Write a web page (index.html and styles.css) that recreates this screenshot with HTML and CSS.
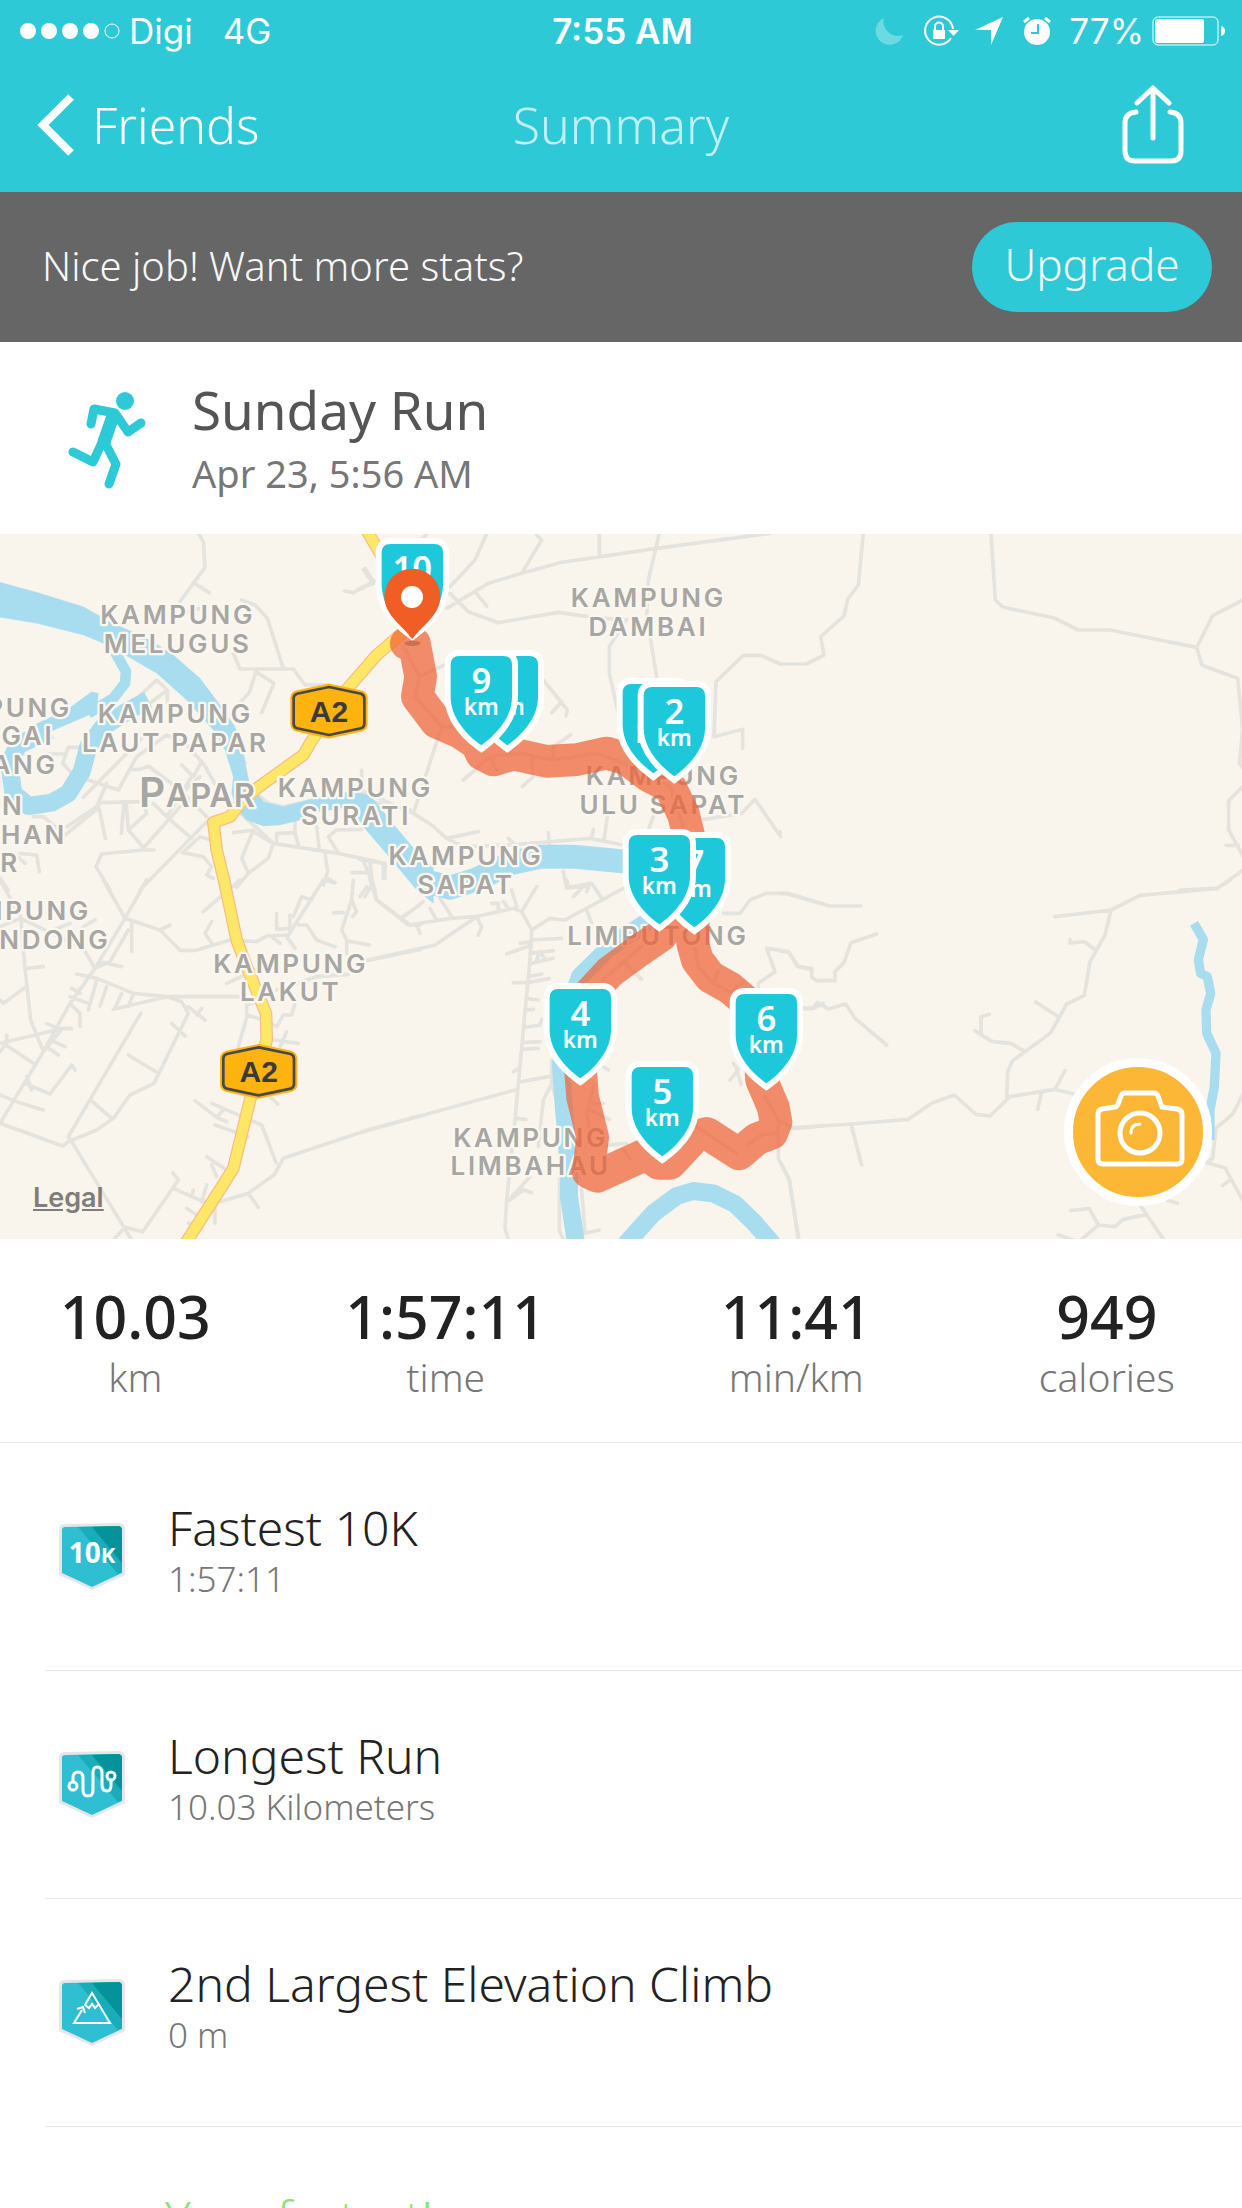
FILE: index.html
```html
<!DOCTYPE html>
<html lang="en">
<head>
	<meta charset="utf-8">
	<meta name="viewport" content="width=device-width, initial-scale=1">
	<title>Summary</title>
	<link rel="stylesheet" href="styles.css">
</head>

<body>
	<header class="topbar">
		<div class="status">
			<div class="status-left">
				<svg class="signal" viewBox="0 0 102 18">
					<circle cx="9" cy="9" r="8"/>
					<circle cx="30" cy="9" r="8"/>
					<circle cx="51" cy="9" r="8"/>
					<circle cx="72" cy="9" r="8"/>
					<circle class="empty" cx="93" cy="9" r="7"/>
				</svg>
				<span>Digi</span>
				<span class="network">4G</span>
			</div>
			<div class="clock">7:55 AM</div>
			<div class="status-right">
				<svg class="moon" viewBox="0 0 28 28"><path d="M9 1A14 14 0 1 0 28 18A14.500 14.500 0 0 1 9 1Z"/></svg>
				<svg class="lock" viewBox="0 0 36 32">
					<path class="line" d="M28 23A14 14 0 1 1 30 14"/>
					<path d="M25 15H36L30.500 21Z"/>
					<path class="line" d="M12 15V11.500A4 4 0 0 1 20 11.500V15"/>
					<rect x="10" y="15" width="12" height="9"/>
				</svg>
				<svg class="arrow" viewBox="0 0 28 28"><path d="M28 0L16 28V13H0Z"/></svg>
				<svg class="alarm" viewBox="0 0 28 30">
					<circle cx="14" cy="16" r="13"/>
					<path class="ears" d="M1 6L6 2M27 6L22 2"/>
					<path class="hands" d="M15 8V17H8"/>
				</svg>
				<span>77%</span>
				<svg class="battery" viewBox="0 0 74 30">
					<rect class="case" x="1" y="1" width="65" height="28" rx="5"/>
					<rect x="3" y="3" width="49" height="24" rx="2"/>
					<path d="M69 10Q73 11 73 15Q73 19 69 20Z"/>
				</svg>
			</div>
		</div>
		<nav class="nav">
			<a class="back" href="#">
				<svg viewBox="0 0 40 64"><path d="M35 4L7 32L35 60"/></svg>
				Friends
			</a>
			<h1>Summary</h1>
			<button class="share" type="button" aria-label="Share">
				<svg viewBox="0 0 62 80">
					<path d="M31 4V53M15 18L31 3L47 18M14 27Q3 28 3 38V66Q3 76 13 76H49Q59 76 59 66V38Q59 28 48 27"/>
				</svg>
			</button>
		</nav>
	</header>

	<section class="banner">
		<p>Nice job! Want more stats?</p>
		<button type="button" class="upgrade">Upgrade</button>
	</section>

	<section class="activity">
		<svg class="runner" viewBox="0 0 80 100">
			<circle cx="57" cy="11" r="9"/>
			<path class="arms" d="M23 34L26 19L47 23L60 42L73 33"/>
			<path class="body" d="M45 26L36 52"/>
			<path class="legs" d="M36 48L25 72L5 62M36 51L48 74L41 94"/>
		</svg>
		<div>
			<h2>Sunday Run</h2>
			<p>Apr 23, 5:56 AM</p>
		</div>
	</section>

	<section class="map">
		<!-- map is cut in six tiles, each group has its own origin -->
		<svg class="canvas" viewBox="0 0 3726 2115">
			<defs>
				<path id="shield" d="M-66 0H66Q92 0 92 26V122C92 185 45 235 0 268C-45 235 -92 185 -92 122V26Q-92 0 -66 0Z"/>
				<g id="highway">
					<path class="sign-edge" d="M0 -72L96 -52Q106 -48 106 -38V38Q106 48 96 52L0 72L-96 52Q-106 48 -106 38V-38Q-106 -48 -96 -52Z"/>
					<path class="sign" d="M0 -72L96 -52Q106 -48 106 -38V38Q106 48 96 52L0 72L-96 52Q-106 48 -106 38V-38Q-106 -48 -96 -52Z"/>
				</g>
			</defs>

			<!-- roads -->
			<g class="roads">
				<path transform="translate(0 -12)" d="M595 10L610 35L615 112L540 215M580 158L628 188M725 210L765 225L802 265L850 415M700 370L720 417H880L915 465H985M768 425L822 460L785 548M768 425L748 488L710 528M1095 115L1120 155L1060 188L1033 183M1120 155L1140 150
				M205 652H250M205 652L188 700L220 735L355 780L410 680L500 615L555 640L605 695L580 740L545 705M145 672H195M250 802L440 610M390 718H420L445 708L540 780L620 860M410 550L502 480L470 450L330 580M502 480V520
				M320 760L290 830L200 890M100 860H130L195 915L290 838L300 818L430 815M298 838L316 925M372 815L364 910M378 815L385 900L432 955M430 815L440 850L385 900M462 960H430L305 972L288 1010L330 1080M620 875L420 1080M430 955L540 830M500 860L575 925M575 740L500 860L460 820M610 700L650 770M545 790L600 740
				M700 830L820 940L1015 970L1155 1000V1045M700 908L760 900L725 985L745 1030L710 1072M760 905L820 940L805 985L745 1030M830 935V910L885 908L895 945M885 908V870M950 890L958 960M985 920L1015 970M985 920L1010 900L1085 898M975 970L983 1025L970 1065M983 1045L1005 1058M1055 1028H1105L1090 990L1125 1080M548 968L600 920L650 935M548 968L610 980L635 1010L620 1035L640 1045M770 790L805 820L850 830L1085 780L1085 720M1000 790L1230 840M60 970L110 975L118 1025M75 1000L40 970M0 1045L25 1080M610 480L700 600L735 700M520 260L600 235"/>
				<path transform="translate(1080 -12)" d="M200 10L190 25M378 15L345 90L270 170M530 15L545 30L485 130M718 10V80M1230 10L890 55L600 98L485 130L385 160L260 235M10 120L40 160L0 175M0 178L50 152M345 185L380 228M270 190L325 245L415 278L595 247L700 262L770 268M898 10L865 150L860 260L890 440M800 268L748 350V430L775 550M1062 620L1068 455L1150 376H1202L1262 402M1062 620L1148 598V655M550 450L622 540L618 558M605 515L575 548
				M130 350L178 440L275 395M178 440L165 500L245 590L400 600M245 590L160 850L215 885L260 925L355 905M0 780L160 850M310 750L390 680L480 670L580 690L710 670L850 720L930 770L970 890M580 690V650L632 615M515 680L520 740L487 770M390 680L410 720M260 925L310 950L450 945L690 925L790 945M565 908L568 945M445 925L470 950M700 898L695 925M742 860L732 930M880 860L865 900M1030 868L1145 850L1185 808L1262 920M610 1025L620 1075L690 1060L680 1085M0 988L70 1000V1045M30 1000L40 1075"/>
				<path transform="translate(2340 -12)" d="M250 10L235 165L203 208L192 258L122 320L132 375L80 402H0M633 10L646 210L668 231L823 264L895 300H990L1250 352L1298 257L1390 210M1250 352L1266 406L1373 445L1388 600L1378 700L1390 715M1388 770L1346 812V900L1390 980M1338 946H1375M1390 1020L1312 1075L1200 1080M0 905V915"/>
				<path transform="translate(0 1038)" d="M0 0L62 110L75 265L92 420L130 515L188 445M0 140L62 115L250 205L285 265M78 265L130 260M78 320L10 370L0 360M310 0L375 115L285 265L210 370L130 515L0 730M440 0L375 115L480 150L540 211H588L690 180M480 150L510 135M395 130V215M385 150L330 245L285 265M300 245L365 260M230 282L290 295L400 340L500 350H720M340 388L500 350L545 365L565 400L462 610L390 645L340 715L290 750L205 785M515 430L555 468M565 380L615 420M590 405L605 385M345 385L365 340M385 380L400 340M320 320L300 378M290 300L265 390M215 325L240 340M210 350L265 370M210 370L240 400V440M215 446H175L140 430M0 490L190 445M10 490L100 550M150 480L195 500M140 500L175 525M385 525L472 578M422 400L205 770L215 785L395 1080M0 730L188 798L205 785M75 610L150 642L215 555L225 570M80 590L95 630M0 645L50 665L130 690M272 660L335 715M340 1080L375 1042L428 1055L535 900L518 878M520 925L610 965L660 965L745 940L822 885L850 835L1110 748L1260 707M745 940L775 982M605 965L620 915M575 950L580 930M645 965V1030M560 985L595 1008M565 1030H590M585 662L650 712L680 725M635 670L785 735L828 848M650 712L670 690M645 735L745 770M620 830L680 870M635 855L650 890M810 650L833 672
				M680 310L800 255M715 500L742 405L790 420L830 440L850 405H875L885 370M830 330L950 290L1045 283M1100 242L1260 208M740 400V375L760 370M820 480L895 490M840 500L860 455M610 95L720 0M635 125L615 160L635 190M690 180L770 185L800 168L865 165L970 0L1005 8M830 100V148L870 145V105M880 110L905 50L935 60M895 135H920L950 180L1005 200M860 170L885 205M820 175L840 190M1060 0L1055 60L1025 150L1040 180V220M1055 60L1070 95L1058 110M1000 98H1030M1045 183L1108 195M1115 15L1095 50M1115 0L1130 60L1200 115L1260 75M1200 115L1225 135H1260M0 515L20 490V465M160 150L210 130M250 140L285 120"/>
				<path transform="translate(1080 1038)" d="M30 0L50 60L150 135L270 115L345 110L460 85L485 95L530 20M20 20L0 50M125 115L190 65M210 85L230 120M240 55L275 110M350 110L225 195L0 245M350 110L365 140L355 165M170 135L180 160M395 70H415V90M430 65L445 85M455 30L470 80M485 95L515 150L510 240L490 450L465 720L440 960L435 1045L445 1080M515 150L570 115L615 120L790 25M620 0L625 20L665 22L695 10L725 55M640 50L665 25M515 180L605 175M480 190L515 185M440 222L515 195M515 250L580 235M510 220L580 212M530 240L540 215L555 238M505 290L545 282M460 308H500L568 296M500 355L535 360M500 390L520 388M495 442L540 435L545 418M490 488L540 485M488 508L535 505M485 605L565 590M460 575L478 565M0 758L245 690L465 630M470 715L498 718M575 540V610L550 660L535 800M575 610L600 700L598 1050L610 1080M455 950L510 890M480 925L515 938M665 930L675 1060L718 1050M450 960L490 930M680 90L695 130M790 140L640 300M790 245L845 298M845 200L790 245L730 300M700 620L680 700L700 800L800 790M730 560L745 570M690 670H730M690 690L748 718M790 810L810 835M1090 100H1140L1170 60L1218 40H1282L1390 72M1220 205L1285 215L1312 258L1355 270M1220 205L1245 275L1195 310V330M1330 385H1360L1390 370M1120 550L1135 570L1110 600M1130 570L1143 613M1255 760V835L1288 900L1315 1080M1005 200L1015 260L1060 310L1140 350M1060 310L1075 275M1130 820L1040 760L1000 735M1160 795L1205 765L1255 758L1255 720L1215 650M1255 720L1300 745L1390 738M1120 330L1150 305"/>
				<path transform="translate(2340 1038)" d="M0 41H20L150 78H243M0 213L27 217L55 260L95 265V292L110 302H165V275L192 248L213 188L290 162M70 385H100L112 367L145 387L197 372L225 415L320 495M25 744L215 732L385 718L455 670L523 645L588 703L630 708L690 650L825 628L880 642M213 732L245 855M825 628L855 572M785 635L773 688M680 660L683 575L697 543L735 515L770 490L813 457L860 372L913 346L930 245L975 165L993 90L1080 46L1312 25L1350 0M825 110L993 90M947 210L913 185L870 189V178M735 515L693 490L635 484L585 452M603 460V410L628 403M835 410L767 366M1390 640L1358 702L1308 745L1298 835L1280 848L1335 863L1390 965M1328 917L1352 898M0 845L27 895L57 1080M1080 975L1152 1080M1160 960L1192 970M873 991L928 986L955 1035L1005 1040L1030 1018L1100 1003M955 1035L903 1080M835 1065L880 1080"/>
			</g>

			<!-- rivers -->
			<g class="water">
				<g transform="translate(0 -12)">
					<path d="M0 157L120 190L250 230L330 275L450 330L520 375L600 445L660 525L705 590L728 660L748 760L790 815L850 830L960 800L1060 785L1110 795L1170 870L1215 935L1300 1010V1120L1250 1080L1150 960L1090 890L1050 830L960 845L900 870L840 885L790 888L740 870L710 835L695 790L700 740L675 660L640 600L560 510L470 430L385 380L300 335L250 315L110 280L0 262Z"/>
					<path d="M90 590L200 540L275 485L295 490L290 545L150 605Z"/>
					<path class="w30" d="M325 330L378 425L375 460L340 505L265 550"/>
					<path class="w50" d="M150 600L55 645L28 700L40 790L85 828L155 818L205 790L245 725L265 650L310 590L380 545L445 510"/>
				</g>
				<g transform="translate(1080 -12)">
					<path class="w70" d="M60 890L140 985L200 1055L270 1073L350 1048L450 1000L540 980L640 980L820 997"/>
				</g>
				<g transform="translate(1080 1038)">
					<path class="w50" d="M900 100L840 140L740 210L660 290L620 400L603 560L612 690L627 850L627 950L648 1090"/>
					<path class="w50" d="M790 1100L880 1000L950 948L1000 933L1060 940L1125 972L1180 1025L1245 1100"/>
				</g>
				<g transform="translate(2340 1038)">
					<path class="w26" d="M1242 130L1270 178L1255 240L1262 280L1282 290L1292 340L1278 390L1280 460L1308 520L1303 620L1290 690V780"/>
				</g>
			</g>

			<!-- main road -->
			<g class="highway-edge">
				<path d="M1095 -20L1150 75L1250 260L1190 312L1130 363L1030 478L930 628L910 663L770 763L720 808L690 848L640 865L650 948L672 1038L710 1218L740 1298L798 1438L800 1518L755 1678L700 1903L640 1998L555 2130"/>
			</g>
			<g class="highway-fill">
				<path d="M1095 -20L1150 75L1250 260L1190 312L1130 363L1030 478L930 628L910 663L770 763L720 808L690 848L640 865L650 948L672 1038L710 1218L740 1298L798 1438L800 1518L755 1678L700 1903L640 1998L555 2130"/>
			</g>

			<!-- place names -->
			<g class="places">
				<text x="533" y="270">KAMPUNG</text>
				<text x="533" y="356">MELUGUS</text>
				<text class="end" x="216" y="548">PUNG</text>
				<text class="end" x="163" y="634">GAI</text>
				<text class="end" x="173" y="720">ANG</text>
				<text class="end" x="73" y="843">N</text>
				<text class="end" x="201" y="929">HAN</text>
				<text class="end" x="60" y="1015">R</text>
				<text x="526" y="568">KAMPUNG</text>
				<text x="526" y="654">LAUT PAPAR</text>
				<text class="town" x="592" y="820">P<tspan class="small">APAR</tspan></text>
				<text x="1066" y="788">KAMPUNG</text>
				<text x="1068" y="874">SURATI</text>
				<text x="1945" y="220">KAMPUNG</text>
				<text x="1945" y="306">DAMBAI</text>
				<text x="1990" y="754">KAMPUNG</text>
				<text x="1990" y="840">ULU SAPAT</text>
				<text x="1398" y="994">KAMPUNG</text>
				<text x="1398" y="1080">SAPAT</text>
				<text class="end" x="273" y="1158">MPUNG</text>
				<text class="end" x="331" y="1244">NDONG</text>
				<text x="872" y="1316">KAMPUNG</text>
				<text x="872" y="1402">LAKUT</text>
				<text x="1974" y="1233">LIMPUTONG</text>
				<text x="1592" y="1838">KAMPUNG</text>
				<text x="1592" y="1924">LIMBAHAU</text>
			</g>

			<g class="road-sign" transform="translate(987 531)"><use href="#highway"/><text y="32">A2</text></g>
			<g class="road-sign" transform="translate(776 1612)"><use href="#highway"/><text y="32">A2</text></g>

			<!-- route -->
			<path class="route" d="M1219 328H1243L1262 428L1252 488L1310 565L1380 595L1430 628L1445 660L1480 678L1540 660L1640 682L1730 677L1820 657L1880 675L1945 725L2010 758L2050 840L2085 980L2078 1228L2092 1278L2130 1328L2190 1362L2270 1430L2285 1638L2320 1720L2328 1765L2315 1798L2270 1815L2217 1860L2120 1798L2085 1808L2010 1888H1975L1940 1860L1792 1927L1765 1915L1778 1810L1748 1690L1740 1590L1725 1478L1770 1378L1830 1313L1910 1255L1985 1203L2020 1130"/>

			<!-- km markers -->
			<g class="marker" transform="translate(1522 366)"><use href="#shield"/><text y="110">8</text><text class="unit" y="177">km</text></g>
			<g class="marker" transform="translate(1444 366)"><use href="#shield"/><text y="110">9</text><text class="unit" y="177">km</text></g>
			<g class="marker" transform="translate(1960 450)"><use href="#shield"/><text y="110">1</text><text class="unit" y="177">km</text></g>
			<g class="marker" transform="translate(2023 459)"><use href="#shield"/><text y="110">2</text><text class="unit" y="177">km</text></g>
			<g class="marker" transform="translate(2083 912)"><use href="#shield"/><text y="110">7</text><text class="unit" y="177">km</text></g>
			<g class="marker" transform="translate(1978 903)"><use href="#shield"/><text y="110">3</text><text class="unit" y="177">km</text></g>
			<g class="marker" transform="translate(1741 1365)"><use href="#shield"/><text y="110">4</text><text class="unit" y="177">km</text></g>
			<g class="marker" transform="translate(2299 1380)"><use href="#shield"/><text y="110">6</text><text class="unit" y="177">km</text></g>
			<g class="marker" transform="translate(1987 1599)"><use href="#shield"/><text y="110">5</text><text class="unit" y="177">km</text></g>
			<g class="marker" transform="translate(1237 30)"><use href="#shield"/><text y="110">10</text></g>

			<!-- finish pin -->
			<ellipse class="pin-shadow" cx="1237" cy="328" rx="24" ry="8"/>
			<path class="pin" d="M1237 316C1215 280 1153 245 1153 188A84 84 0 0 1 1321 188C1321 245 1259 280 1237 316Z"/>
			<circle class="pin-hole" cx="1236" cy="189" r="33"/>
		</svg>
		<a class="legal" href="#">Legal</a>
		<button class="camera" type="button" aria-label="Add photo">
			<svg viewBox="0 0 90 78">
				<path d="M7 20L20 18Q22 18 23 15L26 7Q27 4 30 4H59Q62 4 63 7L67 18L82 20Q87 21 87 25V70Q87 75 82 75H8Q3 75 3 70V25Q3 21 7 20Z"/>
				<circle cx="45" cy="44" r="20"/>
				<path class="glint" d="M36 44Q36 35 45 35"/>
			</svg>
		</button>
	</section>

	<section class="stats">
		<div><strong>10.03</strong><span>km</span></div>
		<div><strong>1:57:11</strong><span>time</span></div>
		<div><strong>11:41</strong><span>min/km</span></div>
		<div><strong>949</strong><span>calories</span></div>
	</section>

	<ul class="records">
		<li>
			<svg class="badge" viewBox="0 0 68 68">
				<path class="rim" d="M6 1L62 0Q67 1 67 6V52L34 67L1 52V6Q1 2 6 1Z"/>
				<path class="face" d="M7 4L61 3Q64 4 64 7V50L34 64L4 50V7Q4 4 7 4Z"/>
				<path class="shade" d="M20 4L61 3Q64 4 64 7V49L60 51Z"/>
				<path class="dark" d="M34 4L61 3Q64 4 64 7V40Z"/>
				<text x="34" y="40">10<tspan class="k">K</tspan></text>
			</svg>
			<div>
				<h3>Fastest 10K</h3>
				<p>1:57:11</p>
			</div>
		</li>
		<li>
			<svg class="badge" viewBox="0 0 68 68">
				<path class="rim" d="M6 1L62 0Q67 1 67 6V52L34 67L1 52V6Q1 2 6 1Z"/>
				<path class="face" d="M7 4L61 3Q64 4 64 7V50L34 64L4 50V7Q4 4 7 4Z"/>
				<path class="shade" d="M20 4L61 3Q64 4 64 7V49L60 51Z"/>
				<path class="dark" d="M34 4L61 3Q64 4 64 7V40Z"/>
				<path class="line" d="M15 31V27Q15 21 20 21Q25 21 25 27V39Q25 45 30 45Q35 45 35 39V22Q35 16 39 16Q44 16 44 22V34Q44 40 49 40Q53 40 53 34V29"/>
				<circle class="line" cx="15" cy="35" r="4"/>
				<circle class="line" cx="53" cy="25" r="4"/>
			</svg>
			<div>
				<h3>Longest Run</h3>
				<p>10.03 Kilometers</p>
			</div>
		</li>
		<li>
			<svg class="badge" viewBox="0 0 68 68">
				<path class="rim" d="M6 1L62 0Q67 1 67 6V52L34 67L1 52V6Q1 2 6 1Z"/>
				<path class="face" d="M7 4L61 3Q64 4 64 7V50L34 64L4 50V7Q4 4 7 4Z"/>
				<path class="shade" d="M20 4L61 3Q64 4 64 7V49L60 51Z"/>
				<path class="dark" d="M34 4L61 3Q64 4 64 7V40Z"/>
				<path class="line thin" d="M24 31L16 44H52L34 14L27 26L31 29L34 25L37 29L40 26M19 30L25 28L27 34"/>
			</svg>
			<div>
				<h3>2nd Largest Elevation Climb</h3>
				<p>0 m</p>
			</div>
		</li>
		<li class="message">
			<h3>Your fastest!</h3>
		</li>
	</ul>
</body>
</html>
```
FILE: styles.css
```css
* {
	box-sizing: border-box;
}
body {
	margin: 0;
	height: 100vh;
	overflow: hidden;
	display: flex;
	flex-direction: column;
	background: #fff;
	color: #222;
	font-family: "Noto Sans", Lato, sans-serif;
	font-weight: 300;
}
h1, h2, h3, p, ul {
	margin: 0;
	padding: 0;
	font-weight: 300;
}
button {
	border: 0;
	padding: 0;
	background: none;
	font-family: inherit;
	font-weight: 300;
}
a {
	color: inherit;
	text-decoration: none;
}
.topbar, .banner, .activity, .map, .stats {
	flex: none;
}

/* status bar + navigation */
.topbar {
	background: #2dc9d7;
	color: #fff;
}
.status {
	display: grid;
	grid-template-columns: 1fr auto 1fr;
	align-items: center;
	height: 62px;
	padding: 0 16px 0 19px;
	font-family: Inter, "Liberation Sans", sans-serif;
	font-size: 35px;
	font-weight: 400;
	line-height: 40px;
}
.status svg {
	fill: #fff;
}
.status-left, .status-right {
	display: flex;
	align-items: center;
}
.status-right {
	justify-content: flex-end;
}
.signal {
	width: 102px;
	height: 18px;
	margin-right: 8px;
}
.signal .empty {
	fill: none;
	stroke: #fff;
}
.network {
	margin-left: 30px;
}
.clock {
	font-weight: 600;
}
.moon {
	width: 28px;
	height: 28px;
	margin-right: 20px;
	opacity: .3;
}
.lock {
	width: 36px;
	height: 32px;
	margin-right: 16px;
}
.status .line {
	fill: none;
	stroke: #fff;
	stroke-width: 2;
}
.arrow {
	width: 28px;
	height: 28px;
	margin-right: 20px;
}
.alarm {
	width: 28px;
	height: 30px;
	margin-right: 18px;
}
.ears {
	stroke: #fff;
	stroke-width: 3;
}
.alarm .hands {
	fill: none;
	stroke: #2dc9d7;
	stroke-width: 2;
}
.battery {
	width: 74px;
	height: 30px;
	margin-left: 8px;
}
.battery .case {
	fill: none;
	stroke: #fff;
}
.nav {
	display: grid;
	grid-template-columns: 1fr auto 1fr;
	align-items: center;
	height: 130px;
	padding: 0 36px 4px;
	font-size: 50px;
	line-height: 60px;
}
.back {
	display: flex;
	align-items: center;
	gap: 16px;
}
.back svg {
	width: 40px;
	height: 64px;
	fill: none;
	stroke: #fff;
	stroke-width: 8;
}
.nav h1 {
	font-size: 50px;
	opacity: .7;
}
.share {
	justify-self: end;
	height: 80px;
	margin-right: 22px;
}
.share svg {
	width: 62px;
	height: 80px;
	fill: none;
	stroke: #fff;
	stroke-width: 5;
	stroke-linecap: round;
	stroke-linejoin: round;
}

/* upgrade banner */
.banner {
	display: flex;
	align-items: center;
	justify-content: space-between;
	height: 150px;
	padding: 0 30px 0 42px;
	background: #666;
	color: #f7f7f7;
	font-size: 40px;
}
.banner p {
	padding-bottom: 4px;
}
.upgrade {
	width: 240px;
	height: 90px;
	padding-bottom: 6px;
	border-radius: 45px;
	background: #2dc9d7;
	color: #f7f7f7;
	font-size: 44px;
}

/* title of the run */
.activity {
	display: flex;
	align-items: center;
	gap: 44px;
	height: 192px;
	padding: 4px 68px 0;
}
.runner {
	width: 80px;
	height: 100px;
	fill: #2dc9d7;
}
.runner path {
	fill: none;
	stroke: #2dc9d7;
	stroke-width: 9;
	stroke-linecap: round;
	stroke-linejoin: round;
}
.runner .body {
	stroke-width: 13;
}
.activity h2 {
	color: #555;
	font-size: 53px;
	font-weight: 400;
	line-height: 66px;
}
.activity p {
	color: #777;
	font-size: 38px;
	font-weight: 400;
	line-height: 60px;
}

/* map */
.map {
	position: relative;
	background: #f9f5ed;
}
.canvas {
	display: block;
	width: 100%;
	height: auto;
}
.roads {
	fill: none;
	stroke: #e5e3de;
	stroke-width: 11;
	stroke-linecap: round;
	stroke-linejoin: round;
}
.water {
	fill: #a8ddf0;
	stroke: #a8ddf0;
}
.water .w26, .water .w30, .water .w50, .water .w70 {
	fill: none;
	stroke-linejoin: round;
}
.water .w26 { stroke-width: 28; }
.water .w30 { stroke-width: 32; }
.water .w50 { stroke-width: 54; }
.water .w70 { stroke-width: 72; }
.highway-edge, .highway-fill {
	fill: none;
	stroke: #f8bb85;
	stroke-width: 38;
	stroke-linejoin: round;
}
.highway-fill {
	stroke: #fee667;
	stroke-width: 31;
}
.places {
	fill: #a8a6a2;
	stroke: #faf7f1;
	stroke-width: 14;
	stroke-linejoin: round;
	paint-order: stroke;
	font-family: Inter, "Liberation Sans", sans-serif;
	font-size: 78px;
	font-weight: 600;
	letter-spacing: 8px;
	text-anchor: middle;
}
.places .end {
	text-anchor: end;
}
.places .town {
	font-size: 122px;
	letter-spacing: 2px;
}
.places .small {
	font-size: 98px;
}
.sign-edge {
	fill: none;
	stroke: #ffb30f;
	stroke-width: 20;
}
.sign {
	fill: #ffb30f;
	stroke: #484848;
	stroke-width: 8;
}
.road-sign text {
	fill: #3a3a3a;
	font-family: "Liberation Sans", sans-serif;
	font-size: 90px;
	font-weight: 700;
	text-anchor: middle;
}
.route {
	fill: none;
	stroke: #ef6336;
	stroke-width: 98;
	stroke-linecap: round;
	stroke-linejoin: round;
	opacity: .72;
}
.marker use {
	fill: #1dc8da;
	stroke: #fff;
	stroke-width: 36;
	paint-order: stroke;
}
.marker text {
	fill: #fff;
	font-size: 104px;
	font-weight: 600;
	text-anchor: middle;
}
.marker .unit {
	font-size: 68px;
}
.pin {
	fill: #f15e25;
}
.pin-hole {
	fill: #fff;
}
.pin-shadow {
	fill: #c9714f;
}
.legal {
	position: absolute;
	left: 33px;
	bottom: 24px;
	color: #7f7d79;
	font-family: Inter, "Liberation Sans", sans-serif;
	font-size: 27px;
	font-weight: 600;
	line-height: 34px;
	text-decoration: underline;
}
.camera {
	position: absolute;
	right: 30px;
	bottom: 33px;
	display: flex;
	align-items: center;
	justify-content: center;
	width: 148px;
	height: 148px;
	border: 9px solid #fff;
	border-radius: 50%;
	background: #fdb736;
}
.camera svg {
	width: 90px;
	height: 78px;
	margin-left: 4px;
	margin-bottom: 8px;
	fill: none;
	stroke: #fff;
	stroke-width: 5;
}
.camera .glint {
	stroke-width: 3;
	stroke-linecap: round;
}

/* totals */
.stats {
	display: grid;
	grid-template-columns: 27fr 35fr 35fr 27fr;
	height: 204px;
	padding-top: 42px;
	border-bottom: 1px solid #e8e8e8;
	text-align: center;
}
.stats strong, .stats span {
	display: block;
}
.stats strong {
	font-size: 59px;
	font-weight: 500;
	line-height: 70px;
}
.stats span {
	color: #777;
	font-size: 39px;
	line-height: 52px;
}

/* records */
.records {
	list-style: none;
	padding-left: 45px;
}
.records li {
	display: flex;
	align-items: center;
	gap: 42px;
	height: 228px;
	padding-left: 13px;
	border-bottom: 1px solid #e8e8e8;
}
.records div {
	padding-bottom: 14px;
}
.records h3 {
	font-size: 48px;
	line-height: 58px;
}
.records p {
	color: #777;
	font-size: 35px;
	line-height: 44px;
}
.records .message {
	align-items: flex-start;
	padding: 62px 0 0 120px;
	color: #8be07a;
}
.badge {
	width: 68px;
	height: 68px;
	fill: none;
}
.badge .rim { fill: #e6e6e6; }
.badge .face { fill: #30bfd2; }
.badge .shade { fill: #18adb8; }
.badge .dark { fill: #05939b; }
.badge .line {
	stroke: #fff;
	stroke-width: 3;
}
.badge .thin {
	stroke-width: 2;
}
.badge text {
	fill: #fff;
	font-size: 28px;
	font-weight: 700;
	text-anchor: middle;
}
.badge .k {
	font-size: 22px;
}
```
